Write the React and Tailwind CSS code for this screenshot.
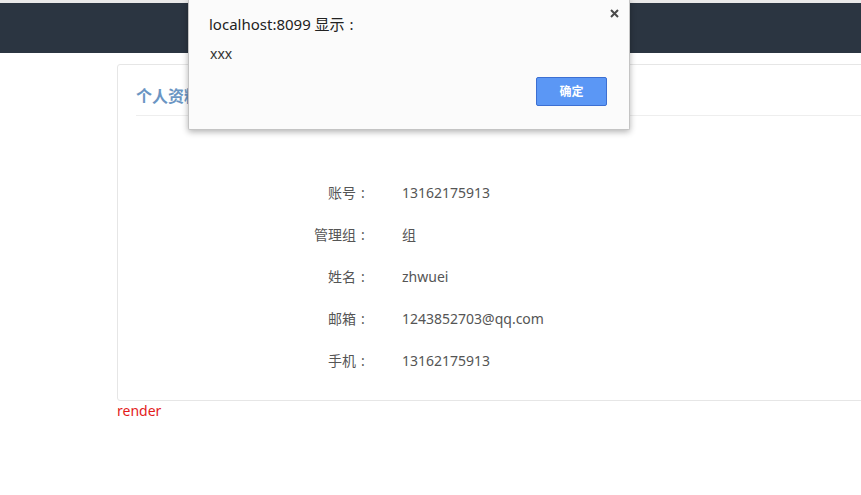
import React from 'react';

const rows = [
  { label: '账号', value: '13162175913' },
  { label: '管理组', value: '组' },
  { label: '姓名', value: 'zhwuei' },
  { label: '邮箱', value: '1243852703@qq.com' },
  { label: '手机', value: '13162175913' },
];

const font = "font-['Noto_Sans','Noto_Sans_CJK_SC',sans-serif]";

// full-width colon, drawn centered like YaHei does
const Colon = () => <span className="inline-block w-[14px] text-center">:</span>;

function AlertDialog() {
  return (
    <div className="absolute left-[188px] top-0 w-[442px] h-[130px] bg-[#fbfbfb] border border-[#c4c4c4] border-t-0 shadow-[0_2px_6px_rgba(0,0,0,0.3)] rounded-b-[2px]">
      <button className="absolute left-[421px] top-[9px] text-[#4a4a4a]">
        <svg width="9" height="9" viewBox="0 0 9 9">
          <path d="M1 1L8 8M8 1L1 8" stroke="currentColor" strokeWidth="2" />
        </svg>
      </button>
      <div className="pl-[20px] pt-[14px] text-[15px] leading-[20px] text-[#222]">
        localhost:8099 显示<Colon />
      </div>
      <div className="pl-[21px] pt-[10px] text-[14px] leading-[20px] text-[#333]">xxx</div>
      <div className="flex justify-end pr-[22px] pt-[13px]">
        <button className="w-[71px] h-[29px] bg-[#5b97f5] border border-[#3c6fd2] rounded-[2px] text-white text-[12px] font-bold">
          确定
        </button>
      </div>
    </div>
  );
}

export default function App() {
  return (
    <div className={`relative min-h-[495px] bg-white overflow-hidden ${font}`}>
      <div className="h-[3px] bg-[#e9e9e9]" />
      <div className="h-[50px] bg-[#2b3541]" />

      <div className="pl-[117px] pt-[11px]">
        <div className="w-[800px] border border-[#e6e6e6] rounded-[3px] bg-white">
          <div className="mx-[18px] pt-[20px] pb-[8px] border-b border-[#eeeeee]">
            <h2 className="text-[16px] leading-[22px] font-bold text-[#6a95c3]">个人资料</h2>
          </div>
          <div className="pt-[55px] pb-[19px]">
            {rows.map((row) => (
              <div key={row.label} className="flex items-center h-[42px] text-[14px] text-[#555]">
                <div className="w-[252px] text-right">
                  {row.label}
                  <Colon />
                </div>
                <div className="ml-[32px]">{row.value}</div>
              </div>
            ))}
          </div>
        </div>
        <div className="text-[14px] leading-[20px] text-[#e31b1b]">render</div>
      </div>

      <AlertDialog />
    </div>
  );
}
